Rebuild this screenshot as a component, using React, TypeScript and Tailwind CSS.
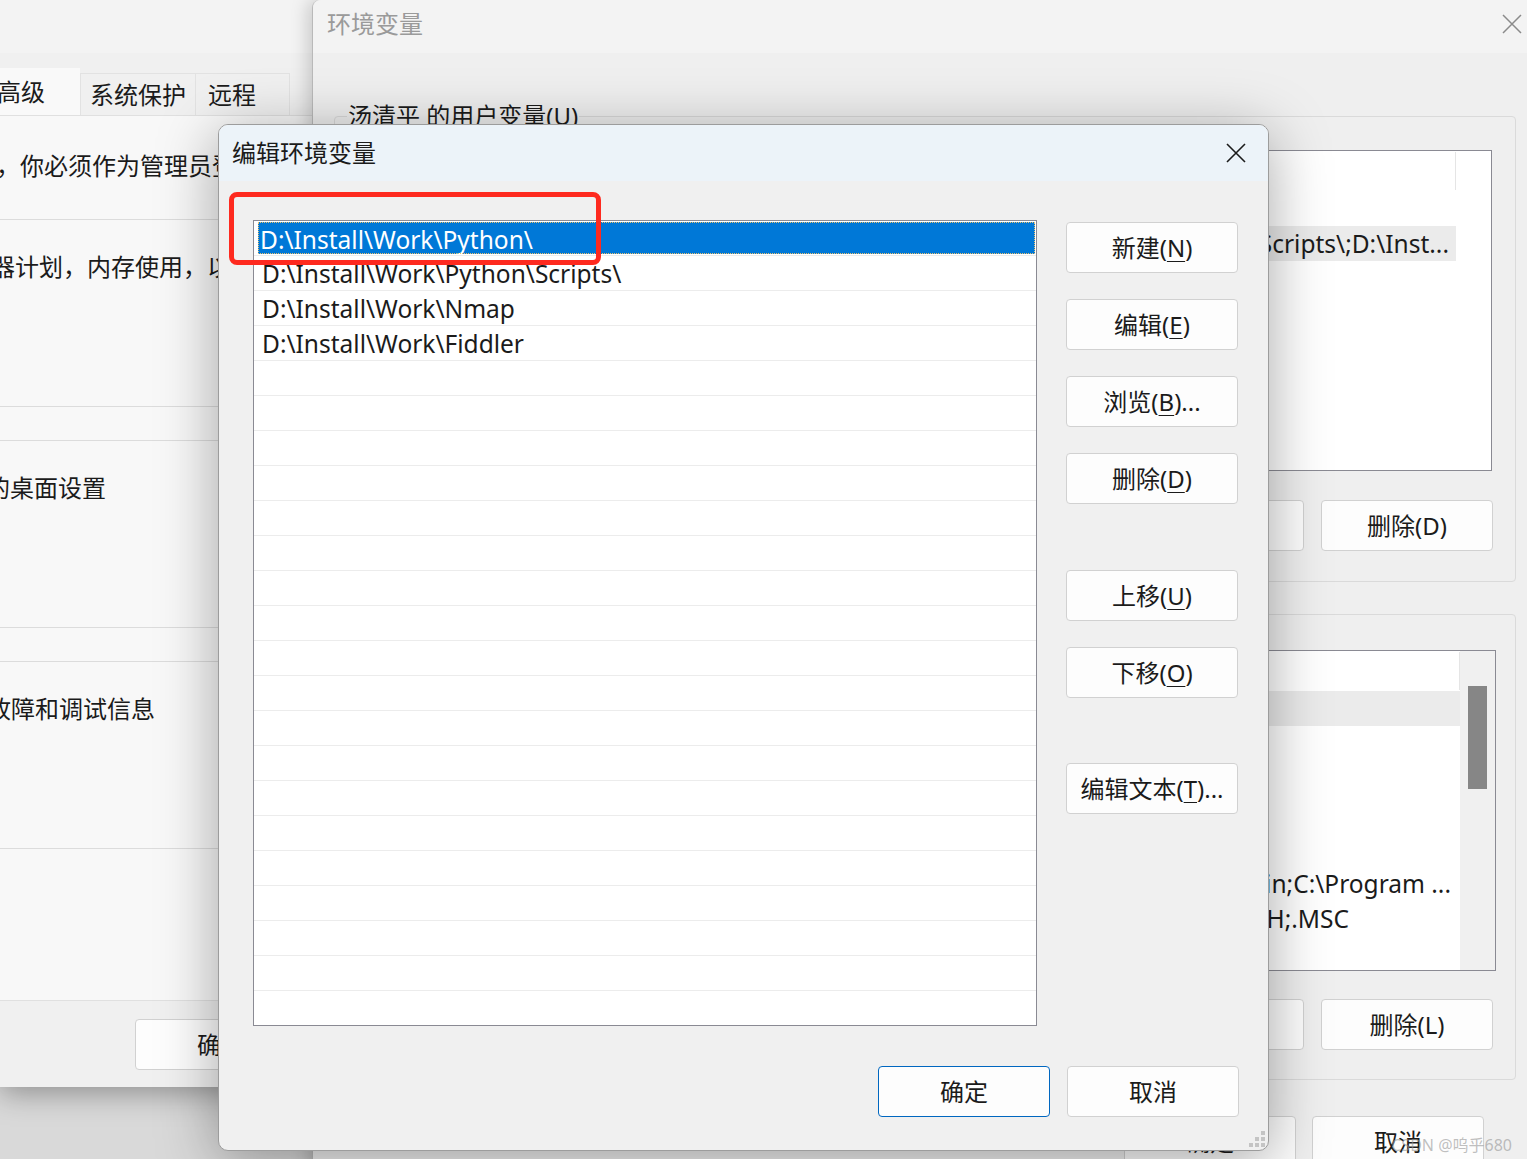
const font = "font-['Noto_Sans','Noto_Sans_CJK_SC',sans-serif]";

const editRows = [
  'D:\\Install\\Work\\Python\\',
  'D:\\Install\\Work\\Python\\Scripts\\',
  'D:\\Install\\Work\\Nmap',
  'D:\\Install\\Work\\Fiddler',
];

function Key({ k }: { k: string }) {
  return <span className="underline decoration-1 underline-offset-[4px]">{k}</span>;
}

interface BtnProps {
  children: React.ReactNode;
  primary?: boolean;
}

function Btn({ children, primary = false }: BtnProps) {
  return (
    <div
      className={`flex h-[51px] w-[172px] shrink-0 items-center justify-center rounded-[4px] border bg-[#fdfdfd] text-[24px] leading-none text-[#1b1b1b] ${
        primary ? 'border-[#0067c0]' : 'border-[#d1d1d1]'
      }`}
    >
      {children}
    </div>
  );
}

function CloseX({ size, color, stroke }: { size: number; color: string; stroke: number }) {
  return (
    <svg width={size} height={size} viewBox="0 0 20 20">
      <path d="M1 1L19 19M19 1L1 19" stroke={color} strokeWidth={stroke} fill="none" />
    </svg>
  );
}

function SystemProps() {
  return (
    <div className="absolute left-0 top-0 flex h-[1087px] w-[360px] flex-col bg-[#f0f0f0] text-[24px] text-[#1b1b1b] shadow-[0_6px_28px_rgba(0,0,0,0.35)]">
      <div className="h-[53px] shrink-0 bg-[#f3f3f3]" />
      <div className="mt-[15px] flex h-[47px] shrink-0 items-end leading-none">
        <div className="flex h-[47px] w-[80px] items-center bg-[#f9f9f9]">
          <span className="-ml-[3px]">高级</span>
        </div>
        <div className="flex h-[42px] w-[116px] items-center border border-b-0 border-[#e2e2e2] pl-[9px]">系统保护</div>
        <div className="flex h-[42px] w-[94px] items-center border border-b-0 border-l-0 border-[#e2e2e2] pl-[12px]">远程</div>
      </div>
      <div className="flex h-[886px] shrink-0 flex-col border-b border-t border-[#e0e0e0] bg-[#f8f8f8] leading-[30px]">
        <div className="mt-[35px] -ml-[4px] whitespace-nowrap">，你必须作为管理员登录才能进行下列大多数更改。</div>
        <div className="mt-[38px] h-[188px] border-y border-[#dcdcdc] pt-[32px]">
          <div className="-ml-[9px] whitespace-nowrap">器计划，内存使用，以及虚拟内存</div>
        </div>
        <div className="mt-[33px] h-[188px] border-y border-[#dcdcdc] pt-[32px]">
          <div className="-ml-[14px] whitespace-nowrap">的桌面设置</div>
        </div>
        <div className="mt-[33px] h-[188px] border-y border-[#dcdcdc] pt-[32px]">
          <div className="-ml-[13px] whitespace-nowrap">故障和调试信息</div>
        </div>
      </div>
      <div className="flex pl-[135px] pt-[18px]">
        <Btn>确定</Btn>
      </div>
    </div>
  );
}

interface EnvRow {
  text: string;
  pr: string;
}

function EnvList({ wide, rows, selected }: { wide: boolean; rows: EnvRow[]; selected: number }) {
  return (
    <div
      className={`flex h-[321px] shrink-0 overflow-hidden border border-[#8a8a93] bg-white text-[24.5px] leading-none ${
        wide ? 'w-[1140px]' : 'w-[1136px]'
      }`}
    >
      <div className={`flex shrink-0 flex-col ${wide ? 'w-[1103px]' : 'w-[1099px]'}`}>
        <div className="flex h-[40px] shrink-0 justify-end">
          <div className="mt-[1px] h-[38px] w-[1px] bg-[#e5e5e5]" />
        </div>
        {rows.map((r, i) => (
          <div
            key={i}
            className={`flex h-[35px] shrink-0 items-center justify-end overflow-hidden whitespace-nowrap pt-[2px] ${
              i === selected ? 'bg-[#ebebeb]' : ''
            } ${r.pr}`}
          >
            {r.text}
          </div>
        ))}
      </div>
      {wide ? (
        <div className="flex flex-1 justify-center bg-[#f0f0f0] pt-[35px]">
          <div className="h-[103px] w-[19px] bg-[#868686]" />
        </div>
      ) : (
        <div className="flex-1" />
      )}
    </div>
  );
}

function EnvVars() {
  const userRows: EnvRow[] = [
    { text: '', pr: '' },
    { text: 'C:\\Users\\AppData\\Local\\Microsoft\\WindowsApps;D:\\Install\\Work\\Python\\Scripts\\;D:\\Inst...', pr: 'pr-[7px]' },
    { text: '', pr: '' },
    { text: '', pr: '' },
    { text: '', pr: '' },
    { text: '', pr: '' },
    { text: '', pr: '' },
    { text: '', pr: '' },
  ];
  const sysRows: EnvRow[] = [
    { text: '', pr: '' },
    { text: '', pr: '' },
    { text: '', pr: '' },
    { text: '', pr: '' },
    { text: '', pr: '' },
    { text: 'C:\\Windows\\system32;C:\\Windows;C:\\Windows\\System32\\Wbem;C:\\Program Files\\bin;C:\\Program ...', pr: 'pr-[9px]' },
    { text: '.COM;.EXE;.BAT;.CMD;.VBS;.VBE;.JS;.JSE;.WSF;.WSH;.MSC', pr: 'pr-[111px]' },
    { text: '', pr: '' },
  ];
  return (
    <div className="absolute left-[312px] top-0 flex h-[1200px] w-[1250px] flex-col rounded-tl-[8px] border-l border-[#b9b9b9] bg-[#efefef] text-[24px] text-[#1b1b1b] shadow-[-4px_0_18px_rgba(0,0,0,0.18)]">
      <div className="flex h-[53px] shrink-0 items-center justify-between rounded-tl-[8px] bg-[#f3f3f3] pb-[5px] pl-[14px] pr-[40px]">
        <span className="leading-none text-[#9a9a9a]">环境变量</span>
        <CloseX size={20} color="#8a8a8a" stroke={1.5} />
      </div>
      <div className="relative ml-[21px] mt-[63px] flex h-[466px] w-[1182px] shrink-0 flex-col rounded-[4px] border border-[#dadada] pl-[21px]">
        <span className="absolute left-[12px] top-[-15px] bg-[#efefef] px-[1px] leading-[28px]">汤清平 的用户变量(<Key k="U" />)</span>
        <div className="mt-[33px]">
          <EnvList wide={false} rows={userRows} selected={1} />
        </div>
        <div className="mt-[29px] flex justify-end gap-[17px] pr-[22px]">
          <Btn>新建(N)...</Btn>
          <Btn>编辑(E)...</Btn>
          <Btn>删除(D)</Btn>
        </div>
      </div>
      <div className="relative ml-[21px] mt-[32px] flex h-[466px] w-[1182px] shrink-0 flex-col rounded-[4px] border border-[#dadada] pl-[21px]">
        <span className="absolute left-[12px] top-[-15px] bg-[#efefef] px-[1px] leading-[28px]">系统变量(<Key k="S" />)</span>
        <div className="mt-[35px]">
          <EnvList wide rows={sysRows} selected={0} />
        </div>
        <div className="mt-[28px] flex justify-end gap-[17px] pr-[22px]">
          <Btn>新建(W)...</Btn>
          <Btn>编辑(I)...</Btn>
          <Btn>删除(L)</Btn>
        </div>
      </div>
      <div className="ml-[21px] mt-[36px] flex w-[1182px] justify-end gap-[16px] pr-[32px]">
        <Btn>确定</Btn>
        <Btn>取消</Btn>
      </div>
    </div>
  );
}

function Grip() {
  return (
    <svg width="18" height="18" viewBox="0 0 18 18" className="absolute bottom-[2px] right-[2px]">
      <rect x="13" y="1" width="4" height="4" fill="#c4c4c4" />
      <rect x="7" y="7" width="4" height="4" fill="#c4c4c4" />
      <rect x="13" y="7" width="4" height="4" fill="#c4c4c4" />
      <rect x="1" y="13" width="4" height="4" fill="#c4c4c4" />
      <rect x="7" y="13" width="4" height="4" fill="#c4c4c4" />
      <rect x="13" y="13" width="4" height="4" fill="#c4c4c4" />
    </svg>
  );
}

function EditDialog() {
  const blanks = Array.from({ length: 19 }, (_, i) => i);
  return (
    <div className="absolute left-[218px] top-[124px] flex h-[1027px] w-[1051px] flex-col overflow-hidden rounded-[10px] border border-[#9c9c9c] bg-[#f0f0f0] text-[#1b1b1b] shadow-[0_10px_60px_rgba(0,0,0,0.35)]">
      <div className="flex h-[56px] shrink-0 items-center justify-between bg-[#ecf3f9] pl-[13px] pr-[22px]">
        <span className="text-[24px] leading-none">编辑环境变量</span>
        <CloseX size={20} color="#1b1b1b" stroke={1.6} />
      </div>
      <div className="flex flex-col pl-[34px] pr-[29px] pt-[39px]">
        <div className="flex gap-[29px]">
          <div className="flex h-[806px] w-[784px] shrink-0 flex-col overflow-hidden border border-[#8a8a93] bg-white text-[24.5px] leading-none">
            <div className="h-[35px] shrink-0 border-b border-[#ececec] pb-[1px] pl-[4px] pr-[1px] pt-[1px]">
              <div className="flex h-full items-center bg-[#0078d7] pl-[2px] pt-[4px] text-white outline-1 -outline-offset-1 outline-dotted outline-[#e8c070]">
                {editRows[0]}
              </div>
            </div>
            {editRows.slice(1).map((r) => (
              <div key={r} className="flex h-[35px] shrink-0 items-center border-b border-[#ececec] pl-[8px] pt-[3px]">
                {r}
              </div>
            ))}
            {blanks.map((i) => (
              <div key={i} className="h-[35px] shrink-0 border-b border-[#ececec]" />
            ))}
          </div>
          <div className="flex flex-col pt-[2px]">
            <Btn>新建(<Key k="N" />)</Btn>
            <div className="mt-[26px]"><Btn>编辑(<Key k="E" />)</Btn></div>
            <div className="mt-[26px]"><Btn>浏览(<Key k="B" />)...</Btn></div>
            <div className="mt-[26px]"><Btn>删除(<Key k="D" />)</Btn></div>
            <div className="mt-[66px]"><Btn>上移(<Key k="U" />)</Btn></div>
            <div className="mt-[26px]"><Btn>下移(<Key k="O" />)</Btn></div>
            <div className="mt-[65px]"><Btn>编辑文本(<Key k="T" />)...</Btn></div>
          </div>
        </div>
        <div className="mt-[40px] flex justify-end gap-[17px]">
          <Btn primary>确定</Btn>
          <Btn>取消</Btn>
        </div>
      </div>
      <div className="absolute left-[10px] top-[67px] h-[73px] w-[372px] rounded-[8px] border-[5px] border-[#fe2a1f]" />
      <Grip />
    </div>
  );
}

export default function App() {
  return (
    <div className={`relative h-[1159px] w-[1527px] overflow-hidden bg-[#d9d9d9] ${font}`}>
      <SystemProps />
      <EnvVars />
      <EditDialog />
      <div className="absolute bottom-[6px] right-[15px] text-[16px] leading-none text-[rgba(150,150,150,0.6)]">CSDN @呜乎680</div>
    </div>
  );
}
